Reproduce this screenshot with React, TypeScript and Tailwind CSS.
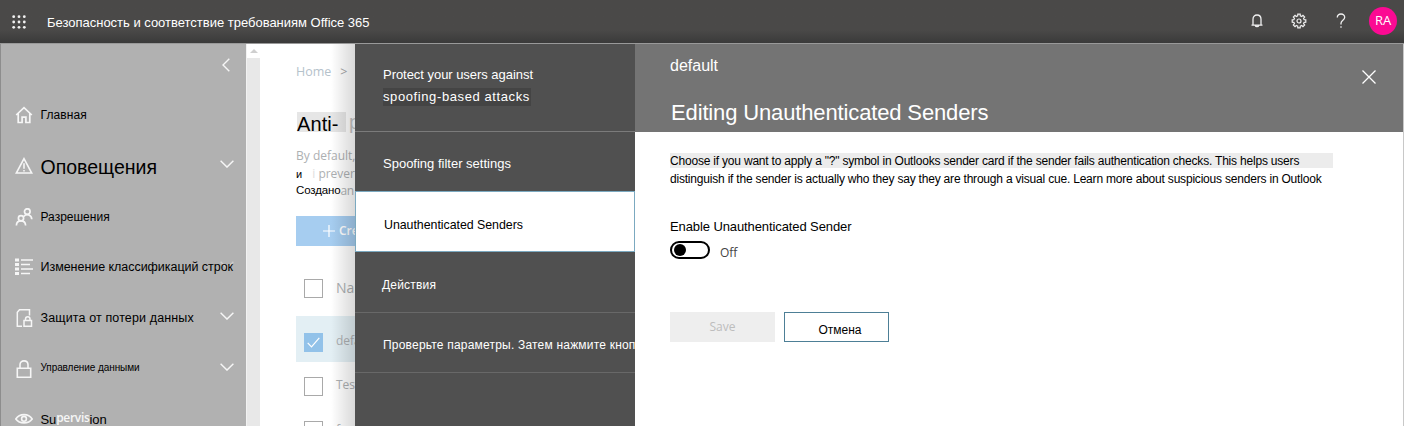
import React from "react";

const stroke = { fill: "none", stroke: "currentColor", strokeWidth: 1.4 } as const;

function Waffle() {
  return (
    <svg className="h-[14px] w-[14px] shrink-0" viewBox="0 0 14 14" fill="#f2f2f2">
      {[1.7, 7, 12.3].map((y) =>
        [1.7, 7, 12.3].map((x) => <circle key={`${x}-${y}`} cx={x} cy={y} r="1.4" />)
      )}
    </svg>
  );
}

function Bell() {
  return (
    <svg className="h-[14px] w-[12px]" viewBox="0 0 12 14" {...stroke} strokeWidth="1.3">
      <path d="M.5 11.1h11M2 11V5.2C2 2.6 3.6 1 6 1s4 1.600 4 4.200V11M4.300 11.500c.4 1.400 3 1.400 3.400 0" />
    </svg>
  );
}

function Gear() {
  const teeth = Array.from({ length: 8 }, (_, i) => {
    const p = (r: number, o: number) => {
      const a = ((i * 45 + o) * Math.PI) / 180;
      return `${(8 + r * Math.cos(a)).toFixed(2)} ${(8 + r * Math.sin(a)).toFixed(2)}`;
    };
    return `${p(5.3, -14)}L${p(6.9, -10)}L${p(6.9, 10)}L${p(5.3, 14)}`;
  });
  return (
    <svg className="h-4 w-4" viewBox="0 0 16 16" {...stroke} strokeWidth="1.2">
      <path d={`M${teeth.join("L")}Z`} />
      <circle cx="8" cy="8" r="2" />
    </svg>
  );
}

function Question() {
  return (
    <svg className="h-4 w-[10px]" viewBox="0 0 10 16" {...stroke} strokeWidth="1.3">
      <path d="M1.300 4.500C1.200 2.300 2.700 1 5 1s3.700 1.300 3.700 3.200C8.700 7 5 7.300 5 10.200V11.500M5 13.300v1.500" />
    </svg>
  );
}

function Chevron({ className = "" }: { className?: string }) {
  return (
    <svg className={`h-2 w-[14px] shrink-0 ${className}`} viewBox="0 0 14 8" {...stroke}>
      <path d="M.6.7 7 7.100 13.400.7" />
    </svg>
  );
}

const box = "h-[18px] w-[18px] shrink-0";
const HomeIcon = () => (
  <svg className={box} viewBox="0 0 18 18" {...stroke} strokeWidth="1.700">
    <path d="M1.200 9 9 1.700 16.800 9M3.200 7.500v9h3.900v-5.400h3.800v5.400h3.900v-9" />
  </svg>
);
const AlertIcon = () => (
  <svg className={box} viewBox="0 0 18 18" {...stroke} strokeWidth="1.600">
    <path d="M9 1.700 1.300 16h15.400ZM9 6.300v5.400M9 13v1.600" />
  </svg>
);
const PeopleIcon = () => (
  <svg className={box} viewBox="0 0 18 18" {...stroke} strokeWidth="1.700">
    <circle cx="12.300" cy="3.600" r="2.800" />
    <circle cx="6" cy="10.200" r="2.600" />
    <path d="M1.400 17.500c.2-6.100 8.900-6.100 9.200 0M8.800 8.500c3-3.300 7.700-1.600 8 2.700" />
  </svg>
);
const ListIcon = () => (
  <svg className={box} viewBox="0 0 18 18" fill="currentColor">
    <path d="M0 .5h4v3H0zM0 5h4v3H0zM0 9.500h4v3H0zM0 14h4v3H0zM6 1.300h12v1.500H6zM6 5.800h9v1.500H6zM6 10.300h12v1.500H6zM6 14.800h9v1.500H6z" />
  </svg>
);
const DocLockIcon = () => (
  <svg className={box} viewBox="0 0 18 18" {...stroke} strokeWidth="1.500">
    <path d="M7 17.200H2.300V3.200L4.500.8H14.500V6.500" />
    <path d="M9 11.600h7.500v5.600H9zM10.500 11.500V10c0-3 4.500-3 4.500 0v1.500" />
  </svg>
);
const LockIcon = () => (
  <svg className={box} viewBox="0 0 18 18" {...stroke} strokeWidth="1.600">
    <path d="M2.300 8.200h13.400v9H2.300zM5 8V4.800C5 -.4 13-.4 13 4.800V8" />
  </svg>
);
const EyeIcon = () => (
  <svg className={box} viewBox="0 0 18 18" {...stroke} strokeWidth="1.600">
    <path d="M.8 9C4.500 3.200 13.500 3.200 17.200 9 13.500 14.200 4.500 14.200.8 9Z" />
    <circle cx="9" cy="8.800" r="2.400" />
  </svg>
);

const items = [
  { icon: <HomeIcon />, text: "Главная", cls: "text-[12px] tracking-[0.1px]", chevron: "" },
  { icon: <AlertIcon />, text: "Оповещения", cls: "text-[19.5px] pt-[3px]", chevron: "mb-1 ml-auto" },
  { icon: <PeopleIcon />, text: "Разрешения", cls: "text-[12px] pt-px", chevron: "" },
  {
    icon: <ListIcon />,
    text: "Изменение классификаций строк",
    cls: "relative z-10 text-[12.5px] tracking-[-0.04px]",
    chevron: "mb-1 -ml-[13px] opacity-40",
  },
  { icon: <DocLockIcon />, text: "Защита от потери данных", cls: "text-[12.5px] tracking-[0.13px]", chevron: "mb-1 ml-auto" },
  { icon: <LockIcon />, text: "Управление данными", cls: "text-[10px] tracking-[-0.08px] pb-[3px]", chevron: "mb-1 ml-auto" },
];

function Sidebar() {
  return (
    <aside className="flex w-[246px] shrink-0 flex-col border-l border-[#8d8d8d] bg-[#b1b1b1] text-[#f6f6f6]">
      <div className="flex h-[46px] shrink-0 items-center justify-end pb-[5px] pr-[16px]">
        <svg className="h-[14px] w-2" viewBox="0 0 8 14" {...stroke}>
          <path d="M7.300.7 1 7l6.300 6.300" />
        </svg>
      </div>
      {items.map((it) => (
        <div key={it.text} className="flex h-[50.7px] shrink-0 items-center pl-[13.5px] pr-3">
          {it.icon}
          <span className={`ml-2 whitespace-nowrap text-black ${it.cls}`}>{it.text}</span>
          {it.chevron && <Chevron className={it.chevron} />}
        </div>
      ))}
      <div className="flex h-[50.7px] shrink-0 items-center pl-[13.5px]">
        <EyeIcon />
        <span className="ml-2 flex items-center whitespace-nowrap pt-px text-[13px] leading-4 tracking-[-0.1px] text-black">
          Su
          <span className="pb-[3px] font-['Open_Sans'] text-[12px] font-semibold tracking-[-0.3px] text-[#f6f6f6]">pervis</span>
          ion
        </span>
      </div>
    </aside>
  );
}

function Check({ on = false }: { on?: boolean }) {
  return on ? (
    <span className="flex h-[19px] w-[19px] shrink-0 items-center justify-center bg-[#92c2e9]">
      <svg className="h-[11px] w-[13px]" viewBox="0 0 13 11" fill="none" stroke="#fff" strokeWidth="1.200">
        <path d="m.7 5.800 3.800 4L12.300.8" />
      </svg>
    </span>
  ) : (
    <span className="h-[19px] w-[19px] shrink-0 border border-[#a9a9a9] bg-white" />
  );
}

function Policies() {
  return (
    <main className="relative flex w-[95px] shrink-0 flex-col overflow-hidden whitespace-nowrap bg-white pl-[36px] font-['Open_Sans'] text-[12px] text-[#adb0b2]">
      <div className="mt-[18px] flex h-5 shrink-0 items-center gap-[9px] text-[12.5px] text-[#b5c2cb]">
        <span>Home</span>
        <span className="text-[#a5a5a5]">&gt;</span>
      </div>
      <div className="mt-[30px] flex h-5 shrink-0 items-center pl-px font-['Liberation_Sans'] text-[20px] text-black">
        <span className="flex h-5 w-[49px] shrink-0 items-center bg-[#e6e6e6] pt-[3px] tracking-[0.1px]">Anti-</span>
        <span className="ml-[3px] text-[#c4c4c4]">p</span>
      </div>
      <div className="mt-[15px] h-[18px] shrink-0 leading-[18px]">By default,</div>
      <div className="flex h-[18px] shrink-0 items-center">
        <span className="w-[18px] font-['Liberation_Sans'] text-[11px] text-black">и</span>
        <span className="text-[#dedede]">i</span>
        <span className="ml-[3px]">prever</span>
      </div>
      <div className="flex h-[18px] shrink-0 items-center pb-[2px]">
        <span className="font-['Liberation_Sans'] text-[11.5px] tracking-[-0.15px] text-black">Создано</span>
        <span className="tracking-[-0.3px]">an</span>
      </div>
      <div className="mt-[15px] flex h-[30px] shrink-0 items-center gap-1 bg-[#a6cdf0] pl-[27px] font-semibold text-white">
        <svg className="h-3 w-3 shrink-0" viewBox="0 0 12 12" stroke="#fff" strokeWidth="1.200">
          <path d="M6 0v12M0 6h12" />
        </svg>
        Create
      </div>
      <div className="mt-[17px] flex h-[50px] shrink-0 items-center gap-[13px] pl-2 text-[14px]">
        <Check />
        <span className="pb-px">Name</span>
      </div>
      <div className="mt-[3px] flex h-[46px] shrink-0 items-center gap-[13px] bg-[#e3eff4] pl-2 pt-[6px]">
        <Check on />
        <span className="pb-[3px]">default</span>
      </div>
      <div className="mt-[2px] flex h-[44px] shrink-0 items-center gap-[13px] pl-2">
        <Check />
        <span className="pb-[3px]">Test</span>
      </div>
      <div className="flex h-[44px] shrink-0 items-center gap-[13px] pl-2">
        <Check />
        <span>for</span>
      </div>
      <div className="absolute inset-y-0 right-0 w-[24px] bg-gradient-to-r from-transparent to-black/15" />
    </main>
  );
}

function Steps() {
  return (
    <nav className="flex w-[280px] shrink-0 flex-col overflow-hidden whitespace-nowrap bg-[#505050] text-[13px] text-white">
      <div className="flex h-[88px] shrink-0 flex-col border-b border-[#7b7b7b] pl-[28px] pt-[20px]">
        <span className="h-[21px] leading-[21px] tracking-[-0.04px]">Protect your users against</span>
        <span className="mt-[3px] h-[18px] w-[148px] bg-[#444] leading-[18px] tracking-[0.6px]">spoofing-based attacks</span>
      </div>
      <div className="flex h-[59px] shrink-0 items-center pl-[28px] pt-[5px]">Spoofing filter settings</div>
      <div className="flex h-[61px] shrink-0 items-center border border-[#7ba9c0] bg-white pl-[28px] pt-[8px] text-[12.4px] tracking-[-0.04px] text-black">
        Unauthenticated Senders
      </div>
      <div className="flex h-[61px] shrink-0 items-center border-b border-[#686868] pl-[27px] pt-[5px] text-[12px] tracking-[0.2px]">Действия</div>
      <div className="flex h-[60px] shrink-0 items-center border-b border-[#686868] pl-[28px] pt-[5px] text-[12px] tracking-[0.2px]">
        Проверьте параметры. Затем нажмите кнопку
      </div>
    </nav>
  );
}

function Editor() {
  return (
    <section className="flex min-w-0 flex-1 flex-col whitespace-nowrap border-r border-[#c8c8c8] bg-white text-black">
      <header className="flex h-[88px] shrink-0 items-start justify-between bg-[#747474] pl-[35px] pr-[27px] text-white">
        <div className="flex flex-col pt-[10px]">
          <span className="h-6 text-[16px] leading-6">default</span>
          <span className="mt-[21px] h-7 pl-px text-[22px] leading-7 tracking-[-0.14px]">Editing Unauthenticated Senders</span>
        </div>
        <svg className="mt-[26px] h-[14px] w-[14px]" viewBox="0 0 14 14" stroke="#fff" strokeWidth="1.300">
          <path d="m.5.5 13 13M13.500.5l-13 13" />
        </svg>
      </header>
      <div className="flex flex-col items-start pl-[35px] pt-[21px]">
        <p className="h-[15px] w-[663px] bg-[#ececec] text-[12px] leading-[17px] tracking-[-0.2px]">
          Choose if you want to apply a "?" symbol in Outlooks sender card if the sender fails authentication checks. This helps users
        </p>
        <p className="mt-[2px] h-[18px] text-[12px] leading-[18px] tracking-[-0.2px]">
          distinguish if the sender is actually who they say they are through a visual cue. Learn more about suspicious senders in Outlook
        </p>
        <div className="mt-[29px] h-5 text-[13px] leading-5 tracking-[-0.1px]">Enable Unauthenticated Sender</div>
        <div className="mt-[4px] flex h-[18px] items-center gap-[10px]">
          <span className="flex h-[18px] w-[40px] items-center rounded-full border-2 border-black pl-[2px]">
            <span className="h-3 w-3 rounded-full bg-black" />
          </span>
          <span className="pt-[5px] font-['Open_Sans'] text-[12px] text-[#444]">Off</span>
        </div>
        <div className="mt-[53px] flex gap-[9px]">
          <button className="h-[30px] w-[105px] bg-[#eee] font-['Open_Sans'] text-[12px] text-[#bdbdbd]">Save</button>
          <button className="h-[30px] w-[105px] border border-[#4d7f96] pl-[7px] pt-[5px] text-[12px]">Отмена</button>
        </div>
      </div>
    </section>
  );
}

export default function App() {
  return (
    <div className="flex h-[426px] w-[1404px] flex-col overflow-hidden font-['Liberation_Sans',sans-serif]">
      <header className="flex h-[43px] shrink-0 items-center bg-linear-to-b from-[#4a4948] from-70% to-[#3a3a3a] pl-3 text-[#f0f0f0]">
        <Waffle />
        <span className="ml-[21px] whitespace-nowrap pt-[2px] text-[13px] tracking-[-0.01px] text-white">
          Безопасность и соответствие требованиям Office 365
        </span>
        <div className="ml-auto flex items-center pb-px pr-[7px]">
          <Bell />
          <span className="ml-[28px]"><Gear /></span>
          <span className="ml-[29px]"><Question /></span>
          <span className="ml-[23px] flex h-7 w-7 items-center justify-center rounded-full bg-[#fb0a93] font-['Open_Sans'] text-[13px] text-white">
            RA
          </span>
        </div>
      </header>
      <div className="flex min-h-0 flex-1 border-t border-[#999]">
        <Sidebar />
        <div className="flex w-[14px] shrink-0 flex-col border-l border-[#f2f2f2] bg-[#e8e8e8]">
          <div className="flex h-[14px] items-center justify-center bg-white">
            <svg className="h-1 w-2" viewBox="0 0 8 4" fill="#cfcfcf">
              <path d="M0 4 4 0l4 4z" />
            </svg>
          </div>
        </div>
        <Policies />
        <Steps />
        <Editor />
      </div>
    </div>
  );
}
